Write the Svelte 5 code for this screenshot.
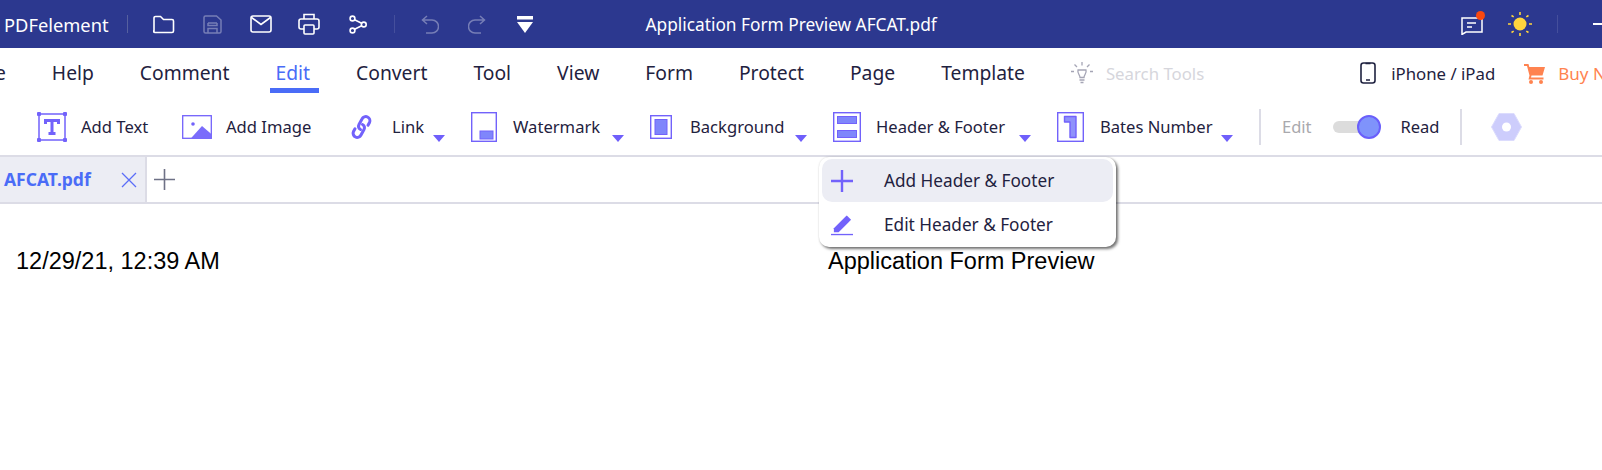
<script>
  const menus = ["File", "Help", "Comment", "Edit", "Convert", "Tool", "View", "Form", "Protect", "Page", "Template"];
  const tools = [
    { id: "text", label: "Add Text", slot: 44, w: 145 },
    { id: "image", label: "Add Image", slot: 44, w: 169 },
    { id: "link", label: "Link", slot: 41, w: 120, more: true },
    { id: "watermark", label: "Watermark", slot: 42, w: 179, more: true },
    { id: "background", label: "Background", slot: 40, w: 183, more: true },
    { id: "headerfooter", label: "Header & Footer", slot: 43, w: 224, more: true },
    { id: "bates", label: "Bates Number", slot: 43, w: 202, more: true }
  ];
</script>

<div class="app">
  <header class="titlebar">
    <span class="brand">PDFelement</span>
    <i class="bar-sep"></i>
    <div class="quick">
      <button aria-label="Open">
        <svg width="22" height="19" viewBox="0 0 22 19" fill="none" stroke="#fff" stroke-width="1.6"><path d="M1 16V3a1.500 1.500 0 0 1 1.500-1.500h5l3 3h8.500a1.500 1.500 0 0 1 1.500 1.500v10a1.500 1.500 0 0 1-1.500 1.500h-17a1.500 1.500 0 0 1-1.500-1.500z"/></svg>
      </button>
      <button aria-label="Save">
        <svg class="dim" width="19" height="19" viewBox="0 0 19 19" fill="none" stroke="#fff" stroke-width="1.500"><path d="M1 2.500A1.500 1.500 0 0 1 2.500 1h11L18 5v11.500a1.500 1.500 0 0 1-1.500 1.500h-14A1.500 1.500 0 0 1 1 16.500zM5 8h9M5 8v2.500h9V8M5 18v-4.500h9V18"/></svg>
      </button>
      <button aria-label="Mail">
        <svg width="22" height="18" viewBox="0 0 22 18" fill="none" stroke="#fff" stroke-width="1.600"><rect x="1" y="1" width="20" height="16" rx="2"/><path d="M1.500 2.500 11 9.500l9.500-7"/></svg>
      </button>
      <button aria-label="Print">
        <svg width="22" height="22" viewBox="0 0 22 22" fill="none" stroke="#fff" stroke-width="1.600"><path d="M6 6V1.500h10V6M6 16H3a2 2 0 0 1-2-2V8a2 2 0 0 1 2-2h16a2 2 0 0 1 2 2v6a2 2 0 0 1-2 2h-3"/><rect x="6" y="12" width="10" height="9" rx="1"/></svg>
      </button>
      <button aria-label="Share">
        <svg width="18" height="19" viewBox="0 0 18 19" fill="none" stroke="#fff" stroke-width="1.600"><circle cx="3.500" cy="3.500" r="2.400"/><circle cx="3.500" cy="15.500" r="2.400"/><circle cx="14.800" cy="9.500" r="2.400"/><path d="M5.600 4.800l7 3.500M5.600 14.300l7-3.600"/></svg>
      </button>
    </div>
    <i class="bar-sep dim-sep"></i>
    <div class="quick history">
      <button aria-label="Undo">
        <svg class="dim" width="18" height="19" viewBox="0 0 18 19" fill="none" stroke="#fff" stroke-width="1.500"><path d="M6 1 1.500 5 6 9M1.500 5H11a5.800 5.800 0 0 1 0 13H5"/></svg>
      </button>
      <button aria-label="Redo">
        <svg class="dim" width="18" height="19" viewBox="0 0 18 19" fill="none" stroke="#fff" stroke-width="1.500"><path d="M12 1l4.500 4L12 9M16.500 5H7a5.800 5.800 0 0 0 0 13h6"/></svg>
      </button>
      <button aria-label="Customize">
        <svg width="16" height="17" viewBox="0 0 16 17" fill="#fff"><rect width="16" height="3.500"/><path d="M0 6h16l-8 11z"/></svg>
      </button>
    </div>
    <span class="doc-title">Application Form Preview AFCAT.pdf</span>
    <div class="bar-right">
      <span class="feedback">
        <svg width="22" height="21" viewBox="0 0 22 21" fill="none" stroke="#fff" stroke-width="1.500"><path d="M1 4h20v14H5l-4 2.500zM6 9h9M6 13h5"/></svg>
        <i class="dot"></i>
      </span>
      <svg class="sun" width="24" height="24" viewBox="0 0 24 24" stroke="#ffd53d" stroke-width="1.600"><circle cx="12" cy="12" r="6.500" fill="#ffd53d" stroke="none"/><path d="M12 0v3M12 21v3M0 12h3M21 12h3M3.500 3.500l2.200 1.400M18.300 19.100l2.200 1.400M20.500 3.500l-2.200 1.400M5.700 19.100l-2.200 1.400"/></svg>
      <i class="bar-sep dim-sep"></i>
      <i class="minimize"></i>
    </div>
  </header>

  <nav class="menubar">
    {#each menus as m}
      <span class="menu" class:active={m === "Edit"}>{m}</span>
    {/each}
    <svg class="bulb" width="22" height="22" viewBox="0 0 22 22" fill="none" stroke="#a5a5b5" stroke-width="1.300"><path d="M7 8h8c1 3-2 5-2 7.500H9C9 13 6 11 7 8zM8.500 18h5M9.500 20.500h3M11 0v3.500M3.500 2.500 6 5M18.500 2.500 16 5M0 9.500h3M19 9.500h3"/></svg>
    <span class="search">Search Tools</span>
    <svg class="phone" width="16" height="22" viewBox="0 0 16 22" fill="none" stroke="#1f2240" stroke-width="1.600"><rect x="1" y="1" width="14" height="20" rx="2.500"/><path d="M5.500 1.500h5M6 18h4"/></svg>
    <span class="iphone">iPhone / iPad</span>
    <svg class="cart" width="21" height="21" viewBox="0 0 21 21" fill="#ff8350"><path d="M0 1h4.500l.8 3H21l-2.500 8.500H7.500L7 14.500h12.500v2H4.500l1-4L3 3H0z"/><circle cx="7" cy="19" r="2"/><circle cx="17" cy="19" r="2"/></svg>
    <span class="buy">Buy Now</span>
  </nav>

  <div class="toolbar">
    {#each tools as t}
      <div class="tool" style="width: {t.w}px">
        <span class="slot" style="width: {t.slot}px">
          {#if t.id === "text"}
            <svg width="30" height="30" viewBox="0 0 30 30" fill="none" stroke="#7262fb" stroke-width="1.500"><rect x="2" y="2" width="26" height="26"/><g fill="#7262fb" stroke="none"><rect x="0" y="0" width="4" height="4" rx="1"/><rect x="26" y="0" width="4" height="4" rx="1"/><rect x="0" y="26" width="4" height="4" rx="1"/><rect x="26" y="26" width="4" height="4" rx="1"/></g><path d="M8.500 12V8.500h13V12M15 8.500V21.500M11.500 21.500h7" stroke-width="3"/></svg>
          {:else if t.id === "image"}
            <svg width="30" height="24" viewBox="0 0 30 24" fill="none" stroke="#7262fb" stroke-width="1.300"><rect x=".7" y=".7" width="28.600" height="22.600"/><circle cx="11" cy="9" r="1.800" fill="#7262fb" stroke="none"/><path d="M9 23.300 20 11l9.300 8v4.300z" fill="#7a6cfb" stroke="none"/></svg>
          {:else if t.id === "link"}
            <svg width="21" height="26" viewBox="0 0 21 26" fill="none" stroke="#7262fb" stroke-width="3" stroke-linecap="round"><path d="M9.500 15.500c-2-1-2.500-3-1.500-5l3-5.500c1-2 3.500-3 5.500-2s3 3.500 2 5.500l-1.500 2.800"/><path d="M11.500 10.500c2 1 2.500 3 1.500 5l-3 5.500c-1 2-3.500 3-5.500 2s-3-3.500-2-5.500l1.500-2.800"/></svg>
          {:else if t.id === "watermark"}
            <svg width="26" height="30" viewBox="0 0 26 30" fill="none" stroke="#7262fb" stroke-width="1.400"><rect x=".7" y=".7" width="24.600" height="28.600"/><rect x="9" y="19" width="13" height="8" fill="#7f86fb" stroke-width="1"/></svg>
          {:else if t.id === "background"}
            <svg width="22" height="24" viewBox="0 0 22 24" fill="none" stroke="#7262fb" stroke-width="1.400"><rect x=".7" y=".7" width="20.600" height="22.600"/><rect x="5" y="4.500" width="12" height="15" fill="#7f86fb" stroke-width="1"/></svg>
          {:else if t.id === "headerfooter"}
            <svg width="28" height="30" viewBox="0 0 28 30" fill="none" stroke="#7262fb" stroke-width="1.400"><rect x=".7" y=".7" width="26.600" height="28.600"/><rect x="4.500" y="4.500" width="19" height="7" fill="#7f86fb" stroke-width="1"/><rect x="4.500" y="18.500" width="19" height="7" fill="#7f86fb" stroke-width="1"/></svg>
          {:else}
            <svg width="27" height="30" viewBox="0 0 27 30" fill="none" stroke="#7262fb" stroke-width="1.400"><rect x=".7" y=".7" width="25.600" height="28.600"/><path d="M7.500 4.500h11.500v21h-6V10H7.500z" fill="#8f92fb" stroke-linejoin="round"/></svg>
          {/if}
        </span>
        <span class="label">{t.label}</span>
        {#if t.more}<i class="caret"></i>{/if}
      </div>
    {/each}
    <i class="tool-sep"></i>
    <span class="mode off">Edit</span>
    <span class="toggle"><i class="knob"></i></span>
    <span class="mode">Read</span>
    <i class="tool-sep second"></i>
    <svg class="hex" width="31" height="28" viewBox="0 0 31 28"><path d="M8 .5h15L30.500 14 23 27.500H8L.5 14z" fill="#cdcdfc" stroke="#dcdcfd"/><circle cx="15.500" cy="14" r="4.500" fill="#fff"/></svg>
  </div>

  <div class="tabbar">
    <div class="tab">
      <span class="tab-name">AFCAT.pdf</span>
      <svg width="16" height="16" viewBox="0 0 16 16" stroke="#5b6df8" stroke-width="1.300"><path d="M1 1l14 14M15 1 1 15"/></svg>
    </div>
    <svg class="newtab" width="21" height="21" viewBox="0 0 21 21" stroke="#6e7186" stroke-width="1.600"><path d="M10.500 0v21M0 10.500h21"/></svg>
  </div>

  <main class="page">
    <span>12/29/21, 12:39 AM</span>
    <span>Application Form Preview</span>
  </main>

  <div class="popup">
    <div class="pop-row hover">
      <svg width="22" height="22" viewBox="0 0 22 22" stroke="#7262fb" stroke-width="2.400"><path d="M11 0v22M0 11h22"/></svg>
      <span>Add Header &amp; Footer</span>
    </div>
    <div class="pop-row">
      <svg width="22" height="23" viewBox="0 0 23 23"><path d="M3 15.500 15 3.500l1.500-1.500 4.500 4.500L8 19.500H3z" fill="#7262fb"/><path d="M0 22h23" stroke="#7262fb" stroke-width="1.400"/></svg>
      <span>Edit Header &amp; Footer</span>
    </div>
  </div>
</div>

<style>
  :global(body) {
    margin: 0;
    background: #fff;
  }

  .app {
    position: relative;
    width: 1602px;
    height: 470px;
    overflow: hidden;
    font-family: "Noto Sans", sans-serif;
    color: #1f2240;
  }

  i {
    display: block;
  }

  .titlebar {
    display: flex;
    align-items: center;
    height: 48px;
    padding-left: 4px;
    background: #2c388f;
    color: #fff;
  }

  .brand {
    width: 123px;
    font-size: 18.300px;
  }

  .bar-sep {
    width: 1px;
    height: 18px;
    background: #56609f;
  }

  .dim-sep {
    background: #454f9c;
  }

  .quick {
    display: flex;
    margin: 0 12px 0 11.500px;
  }

  .quick button {
    display: flex;
    align-items: center;
    justify-content: center;
    width: 48.500px;
    padding: 0;
    border: 0;
    background: none;
  }

  .history {
    margin-left: 11px;
  }

  .history button {
    width: 47.500px;
  }

  .dim {
    opacity: 0.35;
  }

  .doc-title {
    margin-left: 85px;
    font-size: 17.300px;
  }

  .bar-right {
    display: flex;
    align-items: center;
    margin-left: auto;
  }

  .feedback {
    position: relative;
    display: flex;
    margin-right: 25px;
  }

  .dot {
    position: absolute;
    top: -3px;
    right: -2px;
    width: 9px;
    height: 9px;
    border-radius: 50%;
    background: #f9480f;
  }

  .sun {
    margin-right: 25px;
  }

  .minimize {
    width: 9px;
    height: 1.500px;
    margin-left: 35px;
    background: #fff;
  }

  .menubar {
    display: flex;
    align-items: center;
    gap: 46px;
    height: 50px;
    margin-left: -25px;
    font-size: 19.300px;
    white-space: nowrap;
  }

  .menubar > * {
    flex: none;
  }

  .menu {
    position: relative;
    line-height: 50px;
  }

  .menu.active {
    color: #4a6cf7;
  }

  .menu.active::after {
    content: "";
    position: absolute;
    left: -6px;
    right: -9px;
    bottom: 5px;
    height: 5px;
    background: #4a6cf7;
  }

  .search {
    margin-left: -33px;
    font-size: 16.800px;
    color: #d6d6dc;
  }

  .phone {
    margin-left: 110px;
  }

  .iphone {
    margin-left: -31px;
    font-size: 16.800px;
  }

  .cart {
    margin-left: -17px;
  }

  .buy {
    margin-left: -33px;
    font-size: 17px;
    color: #ff8350;
  }

  .toolbar {
    display: flex;
    align-items: center;
    height: 57px;
    padding-left: 37px;
    border-bottom: 2px solid #dcdce6;
    font-size: 16.600px;
    white-space: nowrap;
  }

  .tool {
    display: flex;
    align-items: center;
    flex: none;
    height: 30px;
  }

  .slot {
    display: flex;
    flex: none;
  }

  .caret {
    align-self: flex-end;
    width: 0;
    height: 0;
    margin: 0 26px 0 auto;
    border: 6px solid transparent;
    border-top: 7px solid #6f5ffb;
    border-bottom: 0;
  }

  .tool-sep {
    width: 2px;
    height: 36px;
    background: #dcdce6;
  }

  .tool-sep.second {
    margin-left: 20px;
  }

  .mode {
    margin-left: 21px;
    font-size: 16.500px;
  }

  .mode.off {
    color: #a9a9ad;
  }

  .toggle {
    position: relative;
    width: 36px;
    height: 12px;
    margin-left: 21px;
    border-radius: 6px;
    background: #dcdcdc;
  }

  .knob {
    position: absolute;
    top: -6px;
    right: -12px;
    width: 20px;
    height: 20px;
    border: 2px solid #6a5ffb;
    border-radius: 50%;
    background: #7f93fb;
  }

  .toggle + .mode {
    margin-left: 32px;
  }

  .hex {
    margin-left: 29px;
  }

  .tabbar {
    display: flex;
    align-items: center;
    height: 45px;
    border-bottom: 2px solid #dcdce6;
  }

  .tab {
    display: flex;
    align-items: center;
    box-sizing: border-box;
    width: 147px;
    height: 100%;
    padding-left: 4px;
    border-right: 2px solid #dcdce6;
    background: #ecedf4;
  }

  .tab-name {
    width: 117px;
    margin-top: -2px;
    font-size: 17.500px;
    font-weight: 700;
    color: #4a6cf7;
  }

  .newtab {
    margin-left: 7px;
  }

  .page {
    display: grid;
    grid-template-columns: 812px 1fr;
    padding: 44px 0 0 16px;
    font-family: "Liberation Sans", sans-serif;
    font-size: 23.500px;
    color: #000;
  }

  .popup {
    position: absolute;
    top: 157px;
    left: 819px;
    box-sizing: border-box;
    width: 297px;
    height: 90px;
    padding: 2px 3px;
    border-radius: 10px;
    background: #fff;
    box-shadow: 2px 2px 3px rgba(0, 0, 0, 0.55), 0 0 2px rgba(0, 0, 0, 0.15);
  }

  .pop-row {
    display: flex;
    align-items: center;
    gap: 31px;
    height: 43px;
    padding-left: 9px;
    border-radius: 10px;
    font-size: 17.200px;
  }

  .pop-row + .pop-row {
    padding-top: 1px;
  }

  .pop-row.hover {
    background: #ecedf4;
  }
</style>
